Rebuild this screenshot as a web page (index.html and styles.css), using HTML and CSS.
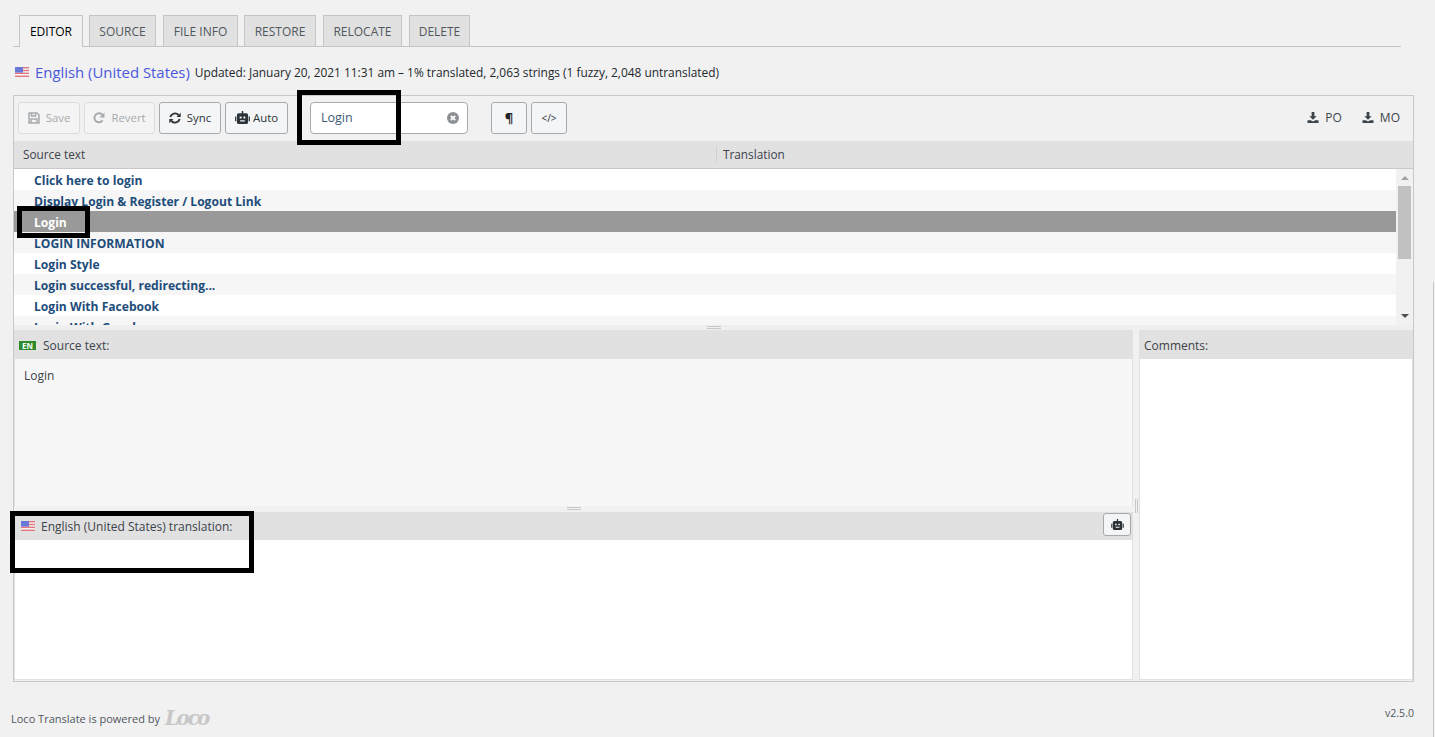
FILE: index.html
```html
<!DOCTYPE html>
<html lang="en">
<head>
  <meta charset="UTF-8" />
  <meta name="viewport" content="width=device-width, initial-scale=1.0"/>
  <title>Loco Translate Editor</title>
  <link rel="stylesheet" href="styles.css">
</head>
<body>
  <svg class="defs" width="0" height="0">
    <symbol id="flag" viewBox="0 0 14 10">
      <rect width="14" height="10" fill="#f4f4f6"/>
      <rect width="14" height="1.4" fill="#e0787e"/>
      <rect y="2.8" width="14" height="1.4" fill="#e0787e"/>
      <rect y="5.6" width="14" height="1.4" fill="#e0787e"/>
      <rect y="8.6" width="14" height="1.4" fill="#e0787e"/>
      <rect width="8" height="5.6" fill="#6a78d8"/>
    </symbol>
    <symbol id="robot" viewBox="0 0 16 14">
      <path fill="currentColor" d="M7.2 0h1.6v2.4H12a2 2 0 0 1 2 2V12a2 2 0 0 1-2 2H4a2 2 0 0 1-2-2V4.4a2 2 0 0 1 2-2h3.2zM0 6h1.3v5H0zM14.7 6H16v5h-1.3zM5 6v2h2V6zM9 6v2h2V6zM5.5 10v1.2h5V10z" fill-rule="evenodd"/>
    </symbol>
    <symbol id="download" viewBox="0 0 12 12">
      <path fill="currentColor" d="M4.5 0h3v4.5H10L6 8.5 2 4.5h2.5zM0 9h3.6L6 10.4 8.4 9H12v3H0z"/>
    </symbol>
  </svg>

  <div class="wrap">
    <div class="tabs">
      <a class="tab active">EDITOR</a>
      <a class="tab w-source">SOURCE</a>
      <a class="tab w-info">FILE INFO</a>
      <a class="tab w-restore">RESTORE</a>
      <a class="tab w-relocate">RELOCATE</a>
      <a class="tab w-delete">DELETE</a>
    </div>

    <div class="title">
      <svg class="flag"><use href="#flag"/></svg>
      <a class="locale">English (United States)</a>
      <span class="stats">Updated: January 20, 2021 11:31 am – 1% translated, 2,063 strings (1 fuzzy, 2,048 untranslated)</span>
    </div>

    <div class="editor">
      <div class="toolbar">
        <button class="btn off w-save">
          <svg width="12" height="12" viewBox="0 0 12 12"><path fill="none" stroke="currentColor" stroke-width="1.5" d="M1 1h8l2 2v8H1zM3.5 1v3h4V1M3 11V7h6v4"/></svg>
          Save
        </button>
        <button class="btn off w-revert">
          <svg width="12" height="12" viewBox="0 0 12 12"><path fill="none" stroke="currentColor" stroke-width="2" d="M9.6 8.4A4.5 4.5 0 1 1 9.4 3"/><path fill="currentColor" d="M11.5.5v5h-5z"/></svg>
          Revert
        </button>
        <button class="btn w-sync">
          <svg width="12" height="12" viewBox="0 0 12 12"><path fill="none" stroke="currentColor" stroke-width="1.9" d="M1.3 5A4.8 4.8 0 0 1 9.5 3M10.7 7A4.8 4.8 0 0 1 2.5 9"/><path fill="currentColor" d="M11.7.8v4.1H7.6zM.3 11.2V7.1h4.1z"/></svg>
          Sync
        </button>
        <button class="btn w-auto"><svg width="15" height="13"><use href="#robot"/></svg>Auto</button>
        <div class="search">
          <span>Login</span>
          <svg width="12" height="12" viewBox="0 0 12 12"><circle cx="6" cy="6" r="6" fill="#8c8f94"/><path stroke="#fff" stroke-width="1.8" d="M3.8 3.8l4.4 4.4M8.2 3.8l-4.4 4.4"/></svg>
        </div>
        <button class="btn square para">¶</button>
        <button class="btn square code">&lt;/&gt;</button>
        <div class="downloads">
          <a><svg width="12" height="11"><use href="#download"/></svg>PO</a>
          <a><svg width="12" height="11"><use href="#download"/></svg>MO</a>
        </div>
      </div>

      <div class="cols">
        <div class="col-source">Source text</div>
        <div class="col-trans">Translation</div>
      </div>

      <div class="list">
        <div class="rows">
          <div class="row">Click here to login</div>
          <div class="row">Display Login &amp; Register / Logout Link</div>
          <div class="row selected">Login</div>
          <div class="row">LOGIN INFORMATION</div>
          <div class="row">Login Style</div>
          <div class="row">Login successful, redirecting...</div>
          <div class="row">Login With Facebook</div>
          <div class="row">Login With Google</div>
        </div>
        <div class="scroll">
          <span class="arrow up"></span>
          <span class="thumb"></span>
          <span class="arrow down"></span>
        </div>
      </div>

      <div class="split"><span class="grip"></span></div>

      <div class="panes">
        <div class="main-pane">
          <div class="pane-head"><span class="en">EN</span>Source text:</div>
          <div class="source-body">Login</div>
          <div class="split-small"><span class="grip"></span></div>
          <div class="pane-head trans-head">
            <svg class="flag"><use href="#flag"/></svg>
            <span>English (United States) translation:</span>
            <button class="btn robot-btn"><svg width="13" height="11"><use href="#robot"/></svg></button>
          </div>
          <div class="trans-body"></div>
        </div>
        <div class="v-split"><span class="v-grip"></span></div>
        <div class="side-pane">
          <div class="pane-head comments-head">Comments:</div>
          <div class="comments-body"></div>
        </div>
      </div>
    </div>

    <div class="footer">
      <div class="powered">Loco Translate is powered by <span class="logo">Loco</span></div>
      <div class="version">v2.5.0</div>
    </div>
  </div>

  <!-- black boxes drawn on top of the screenshot -->
  <div class="mark mark-search"></div>
  <div class="mark mark-login"></div>
  <div class="mark mark-trans"></div>
  <div class="edge"></div>
</body>
</html>
```

FILE: styles.css
```css
html, body {
  height: 737px;
  overflow: hidden;
}
body {
  margin: 0;
  background: #f1f1f1;
  color: #3c434a;
  font-family: "Open Sans", "Liberation Sans", sans-serif;
  font-size: 12px;
  position: relative;
}
.defs {
  position: absolute;
}
.wrap {
  width: 1401px;
  margin-left: 13px;
  padding-top: 15px;
}

/* tabs */
.tabs {
  display: flex;
  gap: 7px;
  height: 31px;
  padding-left: 6px;
  width: 1382px;
  border-bottom: 1px solid #c3c4c7;
}
.tab {
  box-sizing: border-box;
  height: 31px;
  line-height: 32px;
  text-align: center;
  background: #e1e1e1;
  border: 1px solid #c3c4c7;
  border-bottom: none;
  color: #50575e;
  font-size: 12px;
  font-weight: 500;
}
.tab.active {
  width: 64px;
  height: 32px;
  background: #f1f1f1;
  color: #000;
}
.w-source { width: 67px; margin-left: -1px; }
.w-info { width: 75px; }
.w-restore { width: 72px; margin-left: -1px; }
.w-relocate { width: 79px; }
.w-delete { width: 61px; }

/* heading line */
.title {
  display: flex;
  align-items: center;
  height: 20px;
  margin-top: 15px;
  padding-left: 2px;
}
.flag {
  width: 14px;
  height: 10px;
  flex: none;
}
.locale {
  color: #4a58dc;
  font-size: 14.9px;
  margin-left: 6px;
}
.stats {
  margin-left: 5px;
  color: #23282d;
  font-size: 11.9px;
}

/* editor box */
.editor {
  box-sizing: border-box;
  width: 1401px;
  height: 587px;
  margin-top: 13px;
  border: 1px solid #c8c8c8;
}
.toolbar {
  display: flex;
  align-items: center;
  height: 45px;
  padding-left: 4px;
  padding-bottom: 2px;
  box-sizing: border-box;
}
.btn {
  display: flex;
  align-items: center;
  justify-content: center;
  gap: 6px;
  box-sizing: border-box;
  height: 32px;
  padding: 0;
  margin-right: 4px;
  background: #f3f5f6;
  border: 1px solid #a7aaad;
  border-radius: 3px;
  color: #2c3338;
  font-family: inherit;
  font-size: 11.4px;
}
.btn.off {
  border-color: #dcdcde;
  color: #a7aaad;
  background: #f4f4f4;
}
.w-save { width: 62px; }
.w-revert { width: 71px; }
.w-sync { width: 62px; }
.w-auto { width: 63px; gap: 3px; }
.search {
  display: flex;
  align-items: center;
  justify-content: space-between;
  box-sizing: border-box;
  width: 158px;
  height: 32px;
  margin-left: 18px;
  padding: 0 8px 0 10px;
  background: #fff;
  border: 1px solid #a7aaad;
  border-radius: 4px;
  color: #3c5a78;
  font-size: 12.5px;
}
.square {
  width: 36px;
}
.para {
  margin-left: 23px;
  font-weight: 700;
  font-size: 13px;
  color: #1d2327;
}
.code {
  font-size: 10px;
}
.downloads {
  display: flex;
  gap: 20px;
  margin-left: auto;
  padding-right: 13px;
}
.downloads a {
  display: flex;
  align-items: center;
  gap: 6px;
  color: #3c434a;
}

/* table */
.cols {
  display: flex;
  height: 27px;
  line-height: 27px;
  background: #e1e1e1;
  border-bottom: 1px solid #c8c8c8;
  font-size: 11.8px;
}
.col-source {
  width: 702px;
  padding-left: 9px;
  box-sizing: border-box;
}
.col-trans {
  padding-left: 6px;
  border-left: 1px solid #cfcfcf;
  height: 15px;
  line-height: 15px;
  margin-top: 6px;
}
.list {
  display: flex;
  height: 156px;
  overflow: hidden;
  background: #fff;
}
.rows {
  flex: 1;
  overflow: hidden;
}
.row {
  box-sizing: border-box;
  height: 21px;
  line-height: 20px;
  padding: 2px 0 0 20px;
  color: #1d4d7a;
  font-size: 12.1px;
  font-weight: 700;
}
.row:nth-child(even) {
  background: #f6f6f6;
}
.row.selected {
  background: #999;
  color: #fff;
}
.scroll {
  display: flex;
  flex-direction: column;
  align-items: center;
  width: 17px;
  flex: none;
  background: #f1f1f1;
}
.arrow {
  width: 0;
  height: 0;
  border-left: 4px solid transparent;
  border-right: 4px solid transparent;
}
.arrow.up {
  margin-top: 7px;
  border-bottom: 4px solid #a3a3a3;
}
.thumb {
  width: 13px;
  height: 73px;
  margin-top: 6px;
  background: #c1c1c1;
}
.arrow.down {
  margin-top: auto;
  margin-bottom: 7px;
  border-top: 4px solid #505050;
}
.split {
  display: flex;
  justify-content: center;
  height: 5px;
  background: #efefef;
  padding-top: 1px;
  box-sizing: border-box;
}
.grip {
  display: block;
  width: 14px;
  height: 3px;
  border-top: 1px solid #c8c8c8;
  border-bottom: 1px solid #c8c8c8;
  box-sizing: border-box;
}

/* lower panes */
.panes {
  display: flex;
  height: 350px;
}
.main-pane {
  width: 1119px;
  flex: none;
  display: flex;
  flex-direction: column;
}
.pane-head {
  display: flex;
  align-items: center;
  height: 29px;
  flex: none;
  background: #e1e1e1;
  padding: 1px 0 0 5px;
  box-sizing: border-box;
}
.en {
  width: 17px;
  height: 9px;
  line-height: 9px;
  margin-right: 7px;
  text-align: center;
  background: #2d8a2d;
  color: #fff;
  font-size: 8px;
  font-weight: 700;
}
.source-body {
  height: 147px;
  flex: none;
  box-sizing: border-box;
  background: #f7f7f7;
  padding: 8px 9px;
  font-size: 12px;
  border-left: 1px solid #e1e1e1;
  border-right: 1px solid #e1e1e1;
}
.split-small {
  display: flex;
  justify-content: center;
  height: 6px;
  padding-top: 1px;
  box-sizing: border-box;
  background: #f1f1f1;
}
.trans-head {
  height: 28px;
  padding: 0 0 0 7px;
  gap: 6px;
}
.robot-btn {
  width: 28px;
  height: 23px;
  margin: 1px 2px 0 auto;
  align-self: flex-start;
}
.trans-body {
  flex: 1;
  background: #fff;
  border: 1px solid #e1e1e1;
  border-top: none;
}
.v-split {
  display: flex;
  align-items: flex-end;
  justify-content: center;
  width: 6px;
  height: 350px;
  flex: none;
}
.v-grip {
  display: block;
  width: 3px;
  height: 14px;
  margin-bottom: 167px;
  border-left: 1px solid #c8c8c8;
  border-right: 1px solid #c8c8c8;
  box-sizing: border-box;
}
.side-pane {
  flex: 1;
  display: flex;
  flex-direction: column;
}
.comments-body {
  flex: 1;
  background: #fff;
  border: 1px solid #e1e1e1;
  border-top: none;
}

/* footer */
.footer {
  display: flex;
  justify-content: space-between;
  margin-left: -2px;
  padding-top: 23px;
  font-size: 11px;
  color: #50575e;
}
.powered {
  display: flex;
  align-items: center;
  gap: 5px;
}
.logo {
  font-family: "DejaVu Serif", serif;
  font-style: italic;
  font-weight: 700;
  font-size: 20px;
  line-height: 26px;
  color: #c8c8c8;
  letter-spacing: -2.5px;
}
.version {
  margin-top: 1px;
  font-size: 10.6px;
}

/* overlays */
.mark {
  position: absolute;
  box-sizing: border-box;
  border: 5px solid #000;
}
.mark-search {
  left: 297px;
  top: 90px;
  width: 104px;
  height: 55px;
}
.mark-login {
  left: 17px;
  top: 206px;
  width: 73px;
  height: 32px;
}
.mark-trans {
  left: 10px;
  top: 511px;
  width: 244px;
  height: 62px;
}
.edge {
  position: absolute;
  right: 1px;
  top: 282px;
  bottom: 0;
  width: 1px;
  background: #c8c8c8;
}
```
